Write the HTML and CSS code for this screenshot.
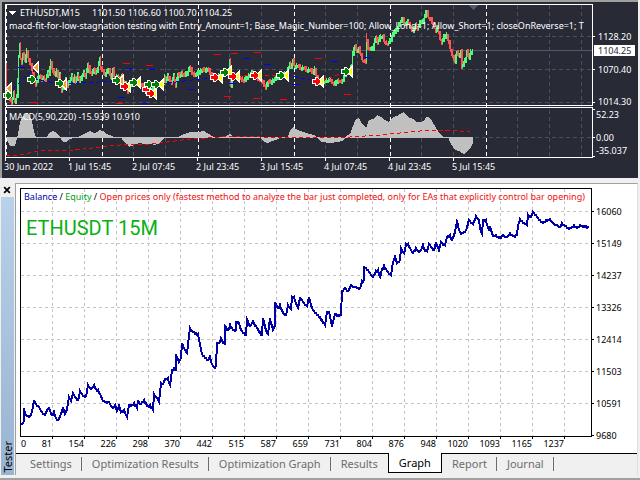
FILE: index.html
```html
<!DOCTYPE html>
<html lang="en">

<head>
    <meta charset="UTF-8">
    <meta name="viewport" content="width=device-width, initial-scale=1.0">
    <title>Strategy Tester - ETHUSDT,M15</title>
    <link rel="stylesheet" href="styles.css">
</head>

<body>

    <section id="market">
        <svg viewBox="2 2 636 176" role="img" aria-label="ETHUSDT M15 price chart">
            <g id="market-grid"></g>
            <polygon points="468,5 479,5 473,10" fill="#555867" />
            <g id="macd"></g>
            <g id="candles"></g>
            <g id="trades"></g>
            <g class="frame">
                <rect x="5.5" y="4.5" width="587" height="101" />
                <rect x="5.5" y="107.5" width="587" height="50" />
            </g>
            <polygon points="8,11 16,11 12,15" fill="#fff" />
            <g class="info">
                <text x="20" y="16">ETHUSDT,M15</text>
                <text x="92" y="16">1101.50 1106.60 1100.70 1104.25</text>
                <text x="9" y="29">macd-fit-for-low-stagnation testing with Entry_Amount=1; Base_Magic_Number=100; Allow_Long=1; Allow_Short=1; closeOnReverse=1; T</text>
                <text x="9" y="120">MACD(5,90,220) -15.939 10.910</text>
            </g>
            <rect x="594" y="45" width="41" height="11" fill="#fff" />
            <g id="market-labels" class="info"></g>
        </svg>
    </section>

    <section id="tester">
        <aside>
            <button class="close" aria-label="Close">
                <svg viewBox="0 0 7 7"><path d="M1 1 L6 6 M6 1 L1 6" /></svg>
            </button>
            <div class="caption"><span>Tester</span></div>
        </aside>

        <div id="panel">
            <svg viewBox="16 184 621 269" role="img" aria-label="Balance graph">
                <g id="balance-grid"></g>
                <text class="legend" x="24" y="200"><tspan fill="#0000a8">Balance</tspan> / <tspan fill="#00a020">Equity</tspan> / <tspan fill="#f01010">Open prices only (fastest method to analyze the bar just completed, only for EAs that explicitly control bar opening)</tspan></text>
                <text class="pair" x="26" y="235">ETHUSDT 15M</text>
                <polyline id="balance" />
                <rect class="box" x="20.5" y="188.5" width="571" height="248" />
                <g id="balance-labels"></g>
            </svg>

            <nav>
                <button>Settings</button>
                <button>Optimization Results</button>
                <button>Optimization Graph</button>
                <button>Results</button>
                <button class="active">Graph</button>
                <button>Report</button>
                <button>Journal</button>
            </nav>
        </div>
    </section>

    <script src="charts.js"></script>

</body>

</html>
```
FILE: styles.css
```css
* {
    box-sizing: border-box;
}

body {
    margin: 0;
    background-color: #f0f0f0;
    font-family: 'Noto Sans', sans-serif;
}

svg {
    display: block;
    width: 100%;
    shape-rendering: crispEdges;
}

#market {
    background-color: #282a36;
    border-top: 2px solid #a0a0a0;
    border-left: 2px solid #a0a0a0;
    margin-right: 2px;
}

.frame rect {
    fill: none;
    stroke: #fff;
}

.info {
    fill: #fff;
    font-size: 9px;
}

.info .current {
    fill: #282a36;
}

.grid {
    stroke: #4b4e5d;
    stroke-dasharray: 4 3;
}

.price {
    stroke: #555867;
}

.day {
    stroke: #fff;
    stroke-dasharray: 4 3;
}

.tick {
    stroke: #fff;
}

.marker {
    stroke: #fff;
    stroke-width: 2;
    paint-order: stroke;
}

#tester {
    display: flex;
    margin-top: 5px;
    padding-right: 2px;
    padding-bottom: 3px;
    border-bottom: 2px solid #a0a0a0;
}

aside {
    display: flex;
    flex-direction: column;
    width: 15px;
    padding: 1px 1px 0;
}

.close {
    width: 12px;
    height: 12px;
    padding: 1px 2px;
    margin-bottom: 1px;
    border: none;
    background: none;
}

.close path {
    stroke: #000;
    stroke-width: 1.5;
    shape-rendering: auto;
}

.caption {
    flex: 1;
    display: flex;
    align-items: flex-end;
    justify-content: center;
    background: linear-gradient(#b9d1ea, #99b4d1);
    font-size: 11px;
    line-height: 13px;
    padding-bottom: 2px;
}

.caption span {
    writing-mode: vertical-rl;
    transform: rotate(180deg);
}

#panel {
    flex: 1;
    min-width: 0;
    border-top: 1px solid #a0a0a0;
    border-left: 1px solid #a0a0a0;
    border-right: 1px solid #e0e0e0;
}

#panel > svg {
    background-color: #fff;
}

.lines {
    stroke: #c4c4c4;
    stroke-dasharray: 3 3;
}

.box {
    fill: none;
    stroke: #000;
}

.mark {
    stroke: #000;
}

.axis {
    font-size: 9px;
}

.legend {
    font-size: 9px;
}

.pair {
    font-family: Roboto, sans-serif;
    font-size: 20px;
    fill: #0ab014;
}

#balance {
    fill: none;
    stroke: #0000a8;
    stroke-width: 2;
}

nav {
    display: flex;
    height: 22px;
    padding-left: 4px;
    border-top: 1px solid #000;
}

nav button {
    position: relative;
    height: 20px;
    padding: 0 10px;
    border: none;
    background: none;
    color: #6d6d6d;
    font-family: 'Noto Sans', sans-serif;
    font-size: 11px;
    line-height: 16px;
    white-space: nowrap;
}

/* short divider between tabs */
nav button::after {
    content: '';
    position: absolute;
    right: 0;
    top: 3px;
    height: 14px;
    border-right: 1px solid #6d6d6d;
}

nav .active {
    margin-top: -1px;
    border: 1px solid #000;
    border-top: none;
    background-color: #fff;
    color: #000;
}

nav .active::after,
nav button:has(+ .active)::after {
    display: none;
}
```
FILE: charts.js
```js
const NS = "http://www.w3.org/2000/svg";

function add(parent, tag, attrs, text) {
    const el = document.createElementNS(NS, tag);
    for (const key in attrs) {
        el.setAttribute(key, attrs[key]);
    }
    if (text !== undefined) {
        el.textContent = text;
    }
    document.getElementById(parent).appendChild(el);
}

function line(parent, x1, y1, x2, y2, cls) {
    add(parent, "line", { x1: x1, y1: y1, x2: x2, y2: y2, class: cls });
}

function toPoints(str) {
    return str.trim().split(/\s+/).map(p => p.split(",").map(Number));
}

// MARKET GRID

[37, 69, 133, 165, 229, 261, 325, 357, 421, 453, 517, 549, 581].forEach(x => {
    line("market-grid", x + 0.5, 5, x + 0.5, 157, "grid");
});
[36, 69, 102, 137].forEach(y => line("market-grid", 6, y + 0.5, 592, y + 0.5, "grid"));
line("market-grid", 6, 50.5, 592, 50.5, "price");
[6, 102, 198, 294, 390, 486].forEach(x => {
    line("market-grid", x + 0.5, 5, x + 0.5, 157, "day");
});

// MACD

const macd = toPoints(`6,137 8,142 10,146 15,146 17,138 18,134 20,122 23,116 26,113 29,114 32,121 34,132 36,137
47,137 49,133 53,131 57,133 60,137 63,142 66,142 70,139 74,138 78,137 82,135 86,133 90,131 94,133 97,132 99,130
103,131 106,134 110,135 114,137 121,137 124,142 129,147 134,145 139,143 145,144 151,144 155,145 160,143 164,138
178,137 184,134 190,132 198,132 204,131 209,134 214,137 225,137 230,134 234,137 241,137 245,138 250,138 254,137
261,138 264,142 268,143 272,141 276,140 280,138 288,137 290,131 293,127 298,130 306,133 314,135 317,138 321,142
330,143 338,142 344,140 347,135 350,134 353,126 356,119 359,118 362,124 366,128 369,120 373,119 377,115 381,117
385,120 389,122 393,117 397,116 400,114 404,112 408,117 413,119 417,122 420,122 424,121 426,117 429,117 432,121
436,128 440,134 444,137 448,137 451,144 455,150 459,151 464,154 468,151 471,147 473,143 473,137`);
add("macd", "polygon", { points: macd.join(" "), fill: "#c0c0c0" });
add("macd", "line", { x1: 6, y1: 137.5, x2: 473, y2: 137.5, stroke: "#c0c0c0" });
add("macd", "polyline", {
    points: "6,155 20,155 38,151 75,150 100,147 120,145 150,144 160,143 190,139 220,137 240,136 260,137 350,137 380,135 400,133 420,131 440,130 460,131 470,131",
    fill: "none", stroke: "#f00", "stroke-dasharray": "4 3"
});

// PRICE

const price = toPoints(`6,63 7,96 8,92 10,97 12,102 14,92 15,101 17,95 18,80 19,55 20,44 21,58 22,62 23,54 25,60
27,50 29,60 31,64 33,72 34,78 36,83 38,77 40,75 42,79 44,77 46,78 48,72 49,73 51,61 53,70 55,74 57,70 59,79 60,74
62,89 64,84 66,79 68,84 70,80 72,75 73,80 75,76 76,81 78,74 80,80 82,75 84,72 86,76 88,63 90,71 92,73 94,68 96,71
98,68 100,57 101,68 103,70 105,73 107,70 109,69 111,76 113,69 115,78 118,75 120,80 122,75 124,85 126,83 128,90
130,84 133,82 136,83 140,82 144,86 147,88 150,92 153,88 156,84 160,84 163,82 165,76 166,80 168,75 170,78 172,81
174,75 176,84 178,73 180,75 182,72 185,74 188,72 190,66 192,72 195,74 198,72 202,69 205,70 208,68 211,73 214,78
217,77 220,74 225,72 229,73 230,60 231,85 232,73 236,76 240,77 244,79 248,76 252,72 256,76 260,78 262,80 264,83
266,87 268,81 271,82 275,78 280,76 284,73 287,72 289,66 290,63 291,66 293,60 295,66 298,65 301,68 304,67 307,70
310,69 313,71 315,68 317,77 319,82 322,81 326,80 330,79 334,83 338,80 342,81 344,76 347,72 350,70 352,64 353,52
355,45 357,50 359,48 361,54 363,60 366,61 366,33 368,46 370,48 373,48 376,36 378,41 380,36 383,36 385,42 388,43
391,39 394,31 397,29 400,22 403,18 405,23 408,21 410,25 413,30 416,24 418,27 420,22 423,21 426,12 427,11 429,17
431,19 433,23 436,30 438,27 440,36 442,41 444,36 447,34 449,42 451,50 453,55 455,60 457,51 459,54 461,51 462,66
464,62 466,57 467,51 469,57 471,51 473,50`);
for (let i = 1; i < price.length; i++) {
    const [x1, y1] = price[i - 1];
    const [x2, y2] = price[i];
    const color = y2 > y1 ? "#ff5555" : "#50fa7b";
    // one bar per pixel between the two points
    for (let x = x1; x < Math.max(x2, x1 + 1); x++) {
        const k = (x - x1) / Math.max(x2 - x1, 1);
        const step = (y2 - y1) / Math.max(x2 - x1, 1);
        const y = y1 + (y2 - y1) * k;
        const wick = (x * 7) % 3;
        const top = Math.min(y, y + step) - wick;
        const bottom = Math.max(y, y + step) + 2 + (x * 5) % 2;
        add("candles", "rect", { x: x, y: Math.round(top), width: 1 + x % 2, height: Math.round(bottom - top), fill: color });
    }
}

// TRADES

// stop levels
[[31, 102], [123, 63], [146, 65], [116, 103], [214, 54], [231, 53], [254, 52], [224, 96], [253, 98], [280, 99], [315, 58], [344, 94]]
    .forEach(([x, y]) => add("trades", "path", { d: `M${x} ${y + 0.5} h7`, stroke: "#f00" }));
[[18, 67], [126, 68], [149, 69], [188, 89], [118, 97], [141, 103], [243, 58], [264, 64], [292, 84], [331, 61], [364, 57], [229, 83]]
    .forEach(([x, y]) => add("trades", "path", { d: `M${x} ${y + 0.5} h7`, stroke: "#00f" }));

add("trades", "path", { d: "M8 94 L35 67 M34 79 L60 84 L118 81 M161 84 L215 77 M287 75 L315 81", fill: "none", stroke: "#00f", "stroke-dasharray": "4 3" });
add("trades", "path", { d: "M237 76 L281 75 M322 81 L345 72", fill: "none", stroke: "#f00", "stroke-dasharray": "4 3" });

const GREEN = "#008000", RED = "#f00", YELLOW = "#ff0", ORANGE = "#f0a030";

function arrow(x, y, color) {
    add("trades", "path", {
        d: `M${x - 3} ${y - 1} h3 v-2 h1 l3 3 v1 l-3 3 h-1 v-2 h-3 z`,
        fill: color, class: "marker"
    });
}

function exit(x, y, color) {
    add("trades", "path", { d: `M${x + 2} ${y - 4} v9 l-4 -4 v-1 z`, fill: color, class: "marker" });
}

[[9, 88, ORANGE], [36, 67, ORANGE], [64, 84, ORANGE], [121, 80, ORANGE], [128, 86, YELLOW], [138, 82, YELLOW], [154, 93, YELLOW],
 [161, 84, YELLOW], [220, 77, YELLOW], [229, 71, YELLOW], [237, 76, YELLOW], [259, 75, YELLOW], [286, 75, YELLOW],
 [321, 81, YELLOW], [350, 71, YELLOW]].forEach(t => exit(...t));
[[7, 95, GREEN], [31, 79, GREEN], [59, 83, GREEN], [116, 80, GREEN], [124, 86, RED], [133, 82, GREEN], [146, 89, RED], [150, 93, RED],
 [148, 84, GREEN], [155, 84, GREEN], [214, 77, RED], [224, 72, GREEN], [232, 76, RED], [254, 75, RED], [280, 75, GREEN],
 [316, 81, RED], [345, 71, GREEN]].forEach(t => arrow(...t));

// MARKET LABELS

[["1128.20", 598, 40], ["1070.40", 598, 73], ["1014.30", 598, 105], ["52.23", 596, 118], ["0.00", 596, 141], ["-35.037", 596, 154]]
    .forEach(([t, x, y]) => add("market-labels", "text", { x: x, y: y }, t));
add("market-labels", "text", { x: 598, y: 54, class: "current" }, "1104.25");
[36, 69, 102, 109, 137, 156].forEach(y => line("market-labels", 593, y + 0.5, 595, y + 0.5, "tick"));

[["30 Jun 2022", 5], ["1 Jul 15:45", 69], ["2 Jul 07:45", 133], ["2 Jul 23:45", 197], ["3 Jul 15:45", 261],
 ["4 Jul 07:45", 325], ["4 Jul 23:45", 389], ["5 Jul 15:45", 453]].forEach(([t, x]) => {
    line("market-labels", x + 0.5, 158, x + 0.5, 161, "tick");
    add("market-labels", "text", { x: x - 1, y: 170 }, t);
});

// BALANCE

[81, 154, 226, 298, 370, 442, 515, 587, 659, 731, 804, 876, 948, 1020, 1093, 1165, 1237].forEach((n, i) => {
    const x = 52 + i * 32;
    line("balance-grid", x + 0.5, 189, x + 0.5, 436, "lines");
    line("balance-labels", x + 0.5, 437, x + 0.5, 439, "mark");
    add("balance-labels", "text", { x: x, y: 447, "text-anchor": "end", class: "axis" }, n);
});
add("balance-labels", "text", { x: 21, y: 447, class: "axis" }, "0");

[16060, 15149, 14237, 13326, 12414, 11503, 10591, 9680].forEach((n, i) => {
    const y = 211 + i * 32;
    if (i < 7) {
        line("balance-grid", 21, y + 0.5, 591, y + 0.5, "lines");
    }
    line("balance-labels", 592, y + 0.5, 594, y + 0.5, "mark");
    add("balance-labels", "text", { x: 596, y: y + 4, class: "axis" }, n);
});

const balance = toPoints(`21,425 24,421 24,408 26,415 30,416 32,411 34,400 36,404
39,407 42,412 45,415 47,410 49,408 52,415 54,412 56,418 58,420 61,414 63,407 65,414 67,409 69,397 71,401 73,393
75,397 78,400 80,391 84,396 86,396 88,385 91,389 94,385 96,389 98,390 101,396 103,401 109,402 113,408 115,405
117,411 119,406 121,412 124,410 127,417 129,405 133,405 134,403 137,408 138,400 140,404 144,400 148,406 150,405
153,410 154,394 157,398 159,402 161,383 163,384 165,379 168,378 170,385 172,370 174,368 176,370 176,354 179,362
181,358 182,343 185,350 187,353 189,336 190,328 193,332 198,334 200,344 202,354 206,358 208,360 210,355 211,362
214,367 216,366 217,343 220,342 221,338 225,345 225,326 228,330 230,325 233,330 236,330 236,321 239,323 241,330
246,335 247,319 250,326 253,321 257,328 262,335 263,318 266,330 268,334 270,318 273,330 275,325 275,302 278,308
280,305 283,313 286,315 288,305 291,309 292,297 294,297 298,308 300,297 303,302 307,306 309,297 312,308 316,313
320,317 325,325 327,312 329,312 332,325 335,314 338,315 341,315 342,291 345,288 348,291 351,285 355,287 360,288
362,281 364,280 364,266 368,270 373,277 376,271 378,270 380,277 382,269 384,266 387,271 391,275 393,262 395,257
397,263 400,260 401,248 404,253 406,244 408,244 411,250 413,253 416,248 419,252 421,250 423,245 424,249 427,251
429,244 434,250 436,242 439,250 441,242 445,245 447,237 450,235 452,240 455,232 457,222 460,232 462,233 466,230
469,220 473,224 476,216 479,220 480,228 482,234 483,220 486,220 489,231 490,226 493,236 496,235 499,238 503,235
507,237 510,233 513,236 517,235 518,225 520,219 522,221 527,225 528,215 531,217 533,212 536,215 540,220 543,223
546,220 550,219 553,223 557,225 560,227 562,223 566,226 569,229 574,225 577,228 580,225 584,226 589,227`);

const steps = [];
balance.forEach(([x, y], i) => {
    steps.push([x, y]);
    const next = balance[i + 1];
    if (next) {
        for (let sx = x + 1; sx < next[0]; sx++) {
            const sy = y + (next[1] - y) * (sx - x) / (next[0] - x);
            steps.push([sx, Math.round(sy) + (sx % 2 ? 1 : 0)]);
        }
    }
});
document.getElementById("balance").setAttribute("points", steps.join(" "));
```
